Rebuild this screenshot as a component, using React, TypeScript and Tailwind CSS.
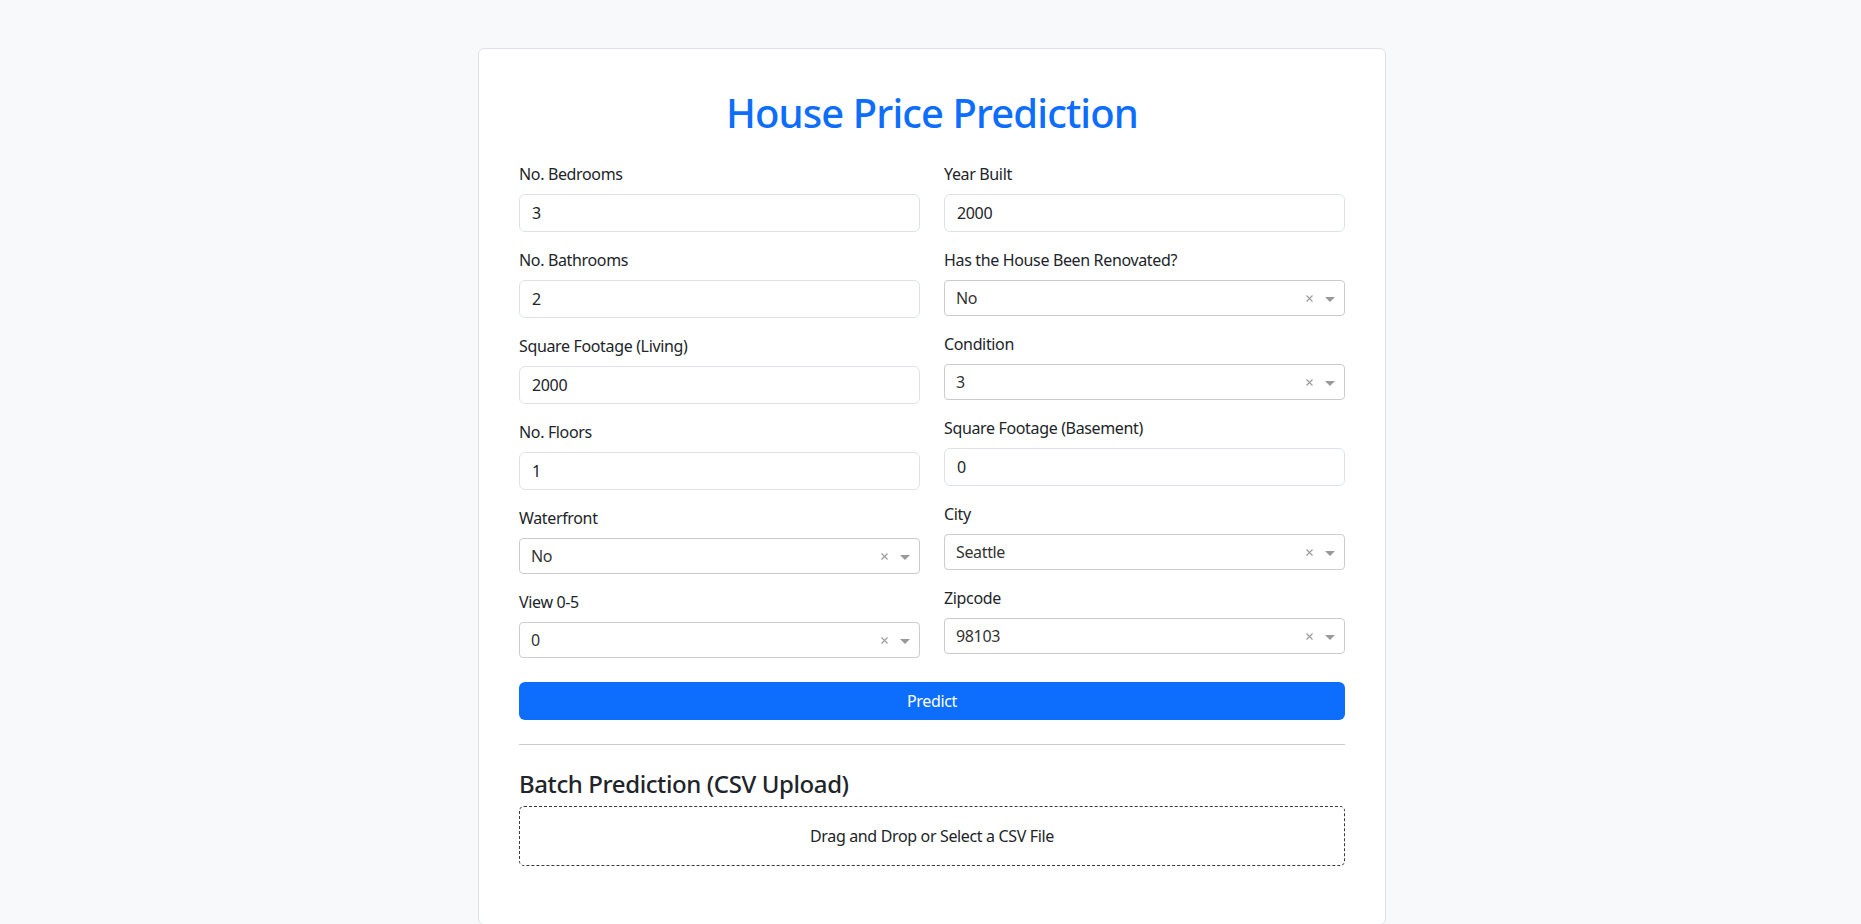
import type { ReactNode } from "react";

const FONT = "font-['Noto_Sans',_'Liberation_Sans',_sans-serif]";

function Label({ children }: { children: ReactNode }) {
  return <label className="block h-6 leading-6 text-base mb-2">{children}</label>;
}

function TextField({ label, value }: { label: string; value: string }) {
  return (
    <div className="mb-4">
      <Label>{label}</Label>
      <input
        type="text"
        defaultValue={value}
        className="block w-full h-[38px] px-3 rounded-[6px] border border-[#dee2e6] bg-white text-base tracking-[-0.35px] text-[#212529] outline-none"
      />
    </div>
  );
}

function SelectField({ label, value }: { label: string; value: string }) {
  return (
    <div className="mb-4">
      <Label>{label}</Label>
      <div className="flex items-center h-[36px] pl-[11px] pr-[9px] rounded-[4px] border border-[#cccccc] bg-white">
        <span className="flex-1 text-base text-[#333]">{value}</span>
        {/* clear */}
        <svg width="7" height="7" viewBox="0 0 7 7" className="mr-[12px]">
          <path d="M0.5 0.5 L6.5 6.5 M6.5 0.5 L0.5 6.5" stroke="#9a9a9a" strokeWidth="1.1" />
        </svg>
        {/* arrow */}
        <svg width="10" height="5" viewBox="0 0 10 5" className="mt-[2px]">
          <path d="M0 0 L10 0 L5 5 Z" fill="#999999" />
        </svg>
      </div>
    </div>
  );
}

export default function App() {
  return (
    <div className={`min-h-screen bg-[#f8f9fa] pt-12 pl-[3px] text-[#212529] tracking-[-0.35px] ${FONT}`}>
      <div className="w-[908px] mx-auto bg-white border border-[#dee2e6] rounded-[6px] px-10 pt-10 pb-[42px]">
        <h1 className="h-12 leading-[48px] text-[40px] font-medium tracking-[-0.9px] text-[#0d6efd] text-center mb-[25px]">
          House Price Prediction
        </h1>

        <div className="grid grid-cols-2 gap-x-6 items-start">
          <div>
            <TextField label="No. Bedrooms" value="3" />
            <TextField label="No. Bathrooms" value="2" />
            <TextField label="Square Footage (Living)" value="2000" />
            <TextField label="No. Floors" value="1" />
            <SelectField label="Waterfront" value="No" />
            <SelectField label="View 0-5" value="0" />
          </div>
          <div>
            <TextField label="Year Built" value="2000" />
            <SelectField label="Has the House Been Renovated?" value="No" />
            <SelectField label="Condition" value="3" />
            <TextField label="Square Footage (Basement)" value="0" />
            <SelectField label="City" value="Seattle" />
            <SelectField label="Zipcode" value="98103" />
          </div>
        </div>

        <button className="mt-2 block w-full h-[38px] rounded-[6px] bg-[#0d6efd] text-white text-base">
          Predict
        </button>

        <hr className="mt-6 border-0 border-t border-[#c9cacb]" />

        <h4 className="mt-6 mb-2 h-[29px] leading-[29px] text-2xl font-medium tracking-[-0.4px]">
          Batch Prediction (CSV Upload)
        </h4>

        <div className="mb-4 h-[60px] leading-[58px] text-center text-base rounded-[5px] border border-dashed border-[#3a3a3a]">
          Drag and Drop or Select a CSV File
        </div>
      </div>
    </div>
  );
}
